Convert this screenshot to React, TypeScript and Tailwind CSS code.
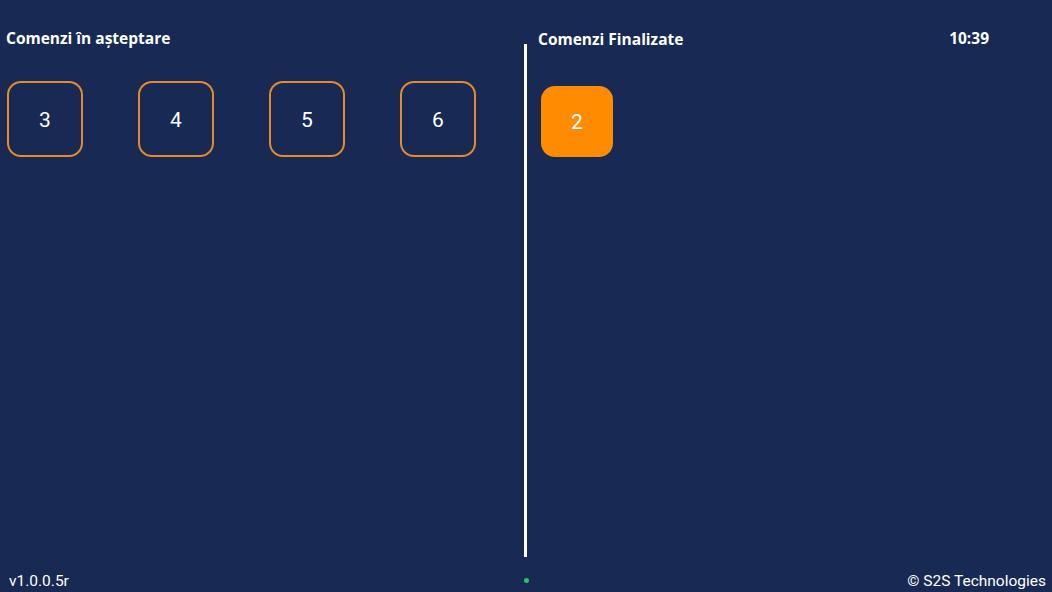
import React from "react";

const pending = [3, 4, 5, 6];
const done = [2];

export default function App() {
  return (
    <div className="h-[592px] w-[1052px] bg-[#182a53] text-white flex flex-col overflow-hidden font-['Roboto',sans-serif]">
      <div className="flex flex-1">
        {/* Pending orders */}
        <div className="w-[524px] pt-[28px] pl-[6px]">
          <h2 className="font-['Open_Sans',sans-serif] font-bold text-[15.5px] leading-[20px]">
            Comenzi în așteptare
          </h2>
          <div className="grid grid-cols-[repeat(4,131px)] mt-[33px] pl-[1px]">
            {pending.map((n) => (
              <div
                key={n}
                className="w-[76px] h-[76px] rounded-[14px] border-2 border-[#e8892a] flex items-center justify-center pt-[3px] text-[21px]"
              >
                {n}
              </div>
            ))}
          </div>
        </div>

        {/* Divider */}
        <div className="w-[3px] bg-white mt-[44px]" />

        {/* Finished orders */}
        <div className="flex-1 pl-[11px] pt-[29px]">
          <div className="flex justify-between items-center pr-[63px] h-[20px]">
            <h2 className="font-['Open_Sans',sans-serif] font-bold text-[15.5px] leading-[20px]">
              Comenzi Finalizate
            </h2>
            <span className="font-['Open_Sans',sans-serif] font-bold text-[15.5px]">10:39</span>
          </div>
          <div className="flex gap-4 mt-[37px] pl-[3px]">
            {done.map((n) => (
              <div
                key={n}
                className="w-[72px] h-[71px] rounded-[14px] bg-[#ff8c00] flex items-center justify-center pt-[2px] text-[21px]"
              >
                {n}
              </div>
            ))}
          </div>
        </div>
      </div>

      {/* Footer */}
      <div className="h-[35px] flex items-end pb-[1px] text-[15.5px] leading-[20px]">
        <span className="w-[524px] pl-[9px]">v1.0.0.5r</span>
        <span className="w-[5px] h-[5px] rounded-full bg-[#22c55e] mb-[8px]" />
        <span className="flex-1 text-right pr-[6px]">© S2S Technologies</span>
      </div>
    </div>
  );
}
